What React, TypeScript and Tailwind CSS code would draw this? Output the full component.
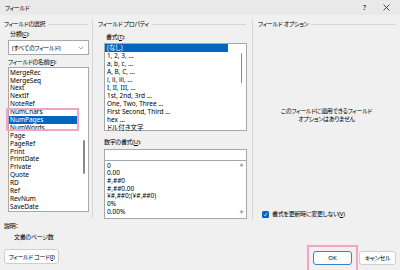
import { ChevronDown } from 'lucide-react';

const fieldNames = [
  'MergeRec', 'MergeSeq', 'Next', 'NextIf', 'NoteRef', 'NumChars', 'NumPages', 'NumWords',
  'Page', 'PageRef', 'Print', 'PrintDate', 'Private', 'Quote', 'RD', 'Ref', 'RevNum', 'SaveDate',
];

const formats = [
  '(なし)', '1, 2, 3, …', 'a, b, c, …', 'A, B, C, …', 'i, ii, iii, …', 'I, II, III, …',
  '1st, 2nd, 3rd …', 'One, Two, Three …', 'First Second, Third …', 'hex …', 'ドル付き文字',
];

const numberFormats = ['0', '0.00', '#,##0', '#,##0.00', '¥#,##0;(¥#,##0)', '0%', '0.00%'];

function Key({ k }: { k: string }) {
  return <span className="underline underline-offset-[1px]">{k}</span>;
}

function GroupHeader({ title, pad }: { title: string; pad: string }) {
  return (
    <div className={`h-[10px] flex items-center gap-[3px] ${pad}`}>
      <span className="whitespace-nowrap">{title}</span>
      <div className="flex-1 h-px bg-[#d6d6d6]" />
    </div>
  );
}

export default function App() {
  return (
    <div className="w-[400px] h-[270px] overflow-hidden relative flex flex-col bg-[#f0f0f0] text-black text-[6px] tracking-[-0.3px] leading-none font-['Noto_Sans','Noto_Sans_CJK_JP',sans-serif] [font-feature-settings:'palt']">
      {/* title bar */}
      <div className="h-[15px] shrink-0 flex items-center bg-[#e9e9e9] pl-[5px] pr-[10px]">
        <span>フィールド</span>
        <span className="ml-auto text-[7px] tracking-normal">?</span>
        <svg className="ml-[17px]" width="7" height="7" viewBox="0 0 7 7">
          <path d="M0.5 0.5L6.5 6.5M6.5 0.5L0.5 6.5" stroke="#222" strokeWidth="0.8" />
        </svg>
      </div>

      {/* three groups */}
      <div className="flex pl-[4px] pt-[4px] h-[205px] shrink-0">
        {/* field selection */}
        <div className="w-[89px] h-[199px] border-r border-[#d6d6d6] flex flex-col">
          <GroupHeader title="フィールドの選択" pad="pr-[4px]" />
          <div className="h-[10px] pl-[6px] flex items-center">分類(<Key k="C" />):</div>
          <div className="mt-[1px] ml-[4px] w-[81px] h-[15px] bg-white border border-[#a8a8a8] flex items-center pl-[3px] pr-[3px]">
            <span>(すべてのフィールド)</span>
            <ChevronDown className="ml-auto text-[#555]" size={8} strokeWidth={1.4} />
          </div>
          <div className="mt-[2px] h-[10px] pl-[4px] flex items-center">フィールドの名前(<Key k="F" />):</div>
          <div className="ml-[4px] w-[81px] h-[145px] bg-white border border-[#a8a8a8] pt-[1px] flex text-[6.5px] tracking-normal">
            <div className="flex-1 pr-[10px]">
              {fieldNames.map((n) => (
                <div
                  key={n}
                  className={`h-[7.9px] flex items-center pl-[1px] ${n === 'NumPages' ? 'bg-[#0067c0] text-white' : ''}`}
                >
                  {n}
                </div>
              ))}
            </div>
          </div>
        </div>

        {/* field properties */}
        <div className="ml-[5px] w-[155px] h-[201px] border-r border-[#d6d6d6] flex flex-col">
          <GroupHeader title="フィールド プロパティ" pad="pr-[6px]" />
          <div className="mt-[3px] h-[10px] pl-[8px] flex items-center">書式(<Key k="T" />):</div>
          <div className="mt-[1px] ml-[6px] w-[143px] h-[88px] bg-white border border-[#a8a8a8] flex text-[6.5px] tracking-normal">
            <div className="flex-1 pr-[9px]">
              {formats.map((f, i) => (
                <div
                  key={f}
                  className={`h-[8px] flex items-center pl-[2px] ${i === 0 ? 'bg-[#0067c0] text-white' : ''}`}
                >
                  {f}
                </div>
              ))}
            </div>
            <div className="w-[9px] flex justify-center pt-[9px]">
              <div className="w-[1.5px] h-[30px] bg-[#8a8a8a] rounded-full" />
            </div>
          </div>
          <div className="mt-[6px] h-[10px] pl-[6px] flex items-center">数字の書式(<Key k="U" />):</div>
          <div className="mt-[2px] ml-[6px] w-[143px] h-[12px] bg-white border border-[#a8a8a8]" />
          <div className="ml-[6px] w-[143px] h-[58px] bg-white border border-t-0 border-[#a8a8a8] flex text-[6.5px] tracking-normal">
            <div className="flex-1 pt-[1px]">
              {numberFormats.map((f) => (
                <div key={f} className="h-[7.7px] flex items-center pl-[2px]">
                  {f}
                </div>
              ))}
            </div>
            <div className="w-[9px] flex flex-col items-center justify-between py-[3px] text-[#9a9a9a] text-[4px]">
              <span>▲</span>
              <span>▼</span>
            </div>
          </div>
        </div>

        {/* field options */}
        <div className="ml-[4px] w-[139px] h-[201px] flex flex-col">
          <GroupHeader title="フィールド オプション" pad="pl-[1px]" />
          <div className="mt-[78px] flex flex-col items-center">
            <div className="h-[8px] flex items-center">このフィールドに適用できるフィールド</div>
            <div className="h-[8px] flex items-center">オプションはありません</div>
          </div>
          <div className="mt-auto mb-[2px] h-[8px] pl-[5px] flex items-center gap-[3px]">
            <div className="w-[7px] h-[7px] rounded-[1.5px] bg-[#0067c0] flex items-center justify-center">
              <svg width="5" height="5" viewBox="0 0 5 5">
                <path d="M0.8 2.6L2 3.8L4.2 1.2" fill="none" stroke="white" strokeWidth="0.8" />
              </svg>
            </div>
            <span>書式を更新時に変更しない(<Key k="V" />)</span>
          </div>
        </div>
      </div>

      {/* bottom area */}
      <div className="flex pl-[4px] pr-[4px]">
        <div className="flex flex-col">
          <div className="mt-[1px] h-[10px] flex items-center">説明：</div>
          <div className="mt-[1px] h-[10px] pl-[10px] flex items-center">文書のページ数</div>
          <div className="mt-[7px] w-[55px] h-[15px] bg-[#fdfdfd] border border-[#cfcfcf] rounded-[3px] flex items-center justify-center whitespace-nowrap">
            フィールド コード(<Key k="I" />)
          </div>
        </div>
        <div className="ml-auto pt-[31px] flex gap-[7px]">
          <div className="w-[39px] h-[14px] bg-[#fdfdfd] border border-[#3f7fc4] rounded-[3px] flex items-center justify-center tracking-normal">
            OK
          </div>
          <div className="w-[37px] h-[14px] bg-[#fdfdfd] border border-[#cfcfcf] rounded-[3px] flex items-center justify-center">
            キャンセル
          </div>
        </div>
      </div>

      {/* pink highlight frames */}
      <div className="absolute left-[6px] top-[108px] w-[73px] h-[23px] border-2 border-[#f2a3c6]" />
      <div className="absolute left-[307px] top-[245px] w-[51px] h-[28px] border-2 border-[#f2a3c6]" />
      {/* left list scrollbar */}
      <div className="absolute left-[83px] top-[140px] w-[1.5px] h-[34px] bg-[#8a8a8a] rounded-full" />
    </div>
  );
}
